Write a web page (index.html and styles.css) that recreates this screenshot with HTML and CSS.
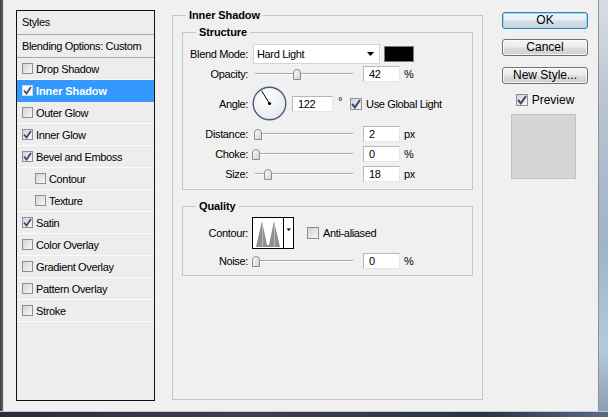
FILE: index.html
```html
<!DOCTYPE html>
<html>
<head>
<meta charset="utf-8">
<title>Layer Style</title>
<link rel="stylesheet" href="styles.css">
</head>
<body>
<div class="screen">
  <div class="frame-row">
    <div class="edge-left"></div>
    <div class="dialog">
      <div class="styles-panel">
        <div class="sp-head first">Styles</div>
        <div class="sp-head">Blending Options: Custom</div>
        <div class="sp-item"><span class="cb"></span>Drop Shadow</div>
        <div class="sp-item sel"><span class="cb on"><svg width="9" height="9" viewBox="0 0 9 9"><path d="M1 4.5 L3.5 7.5 L8 1" fill="none" stroke="#3b4a74" stroke-width="1.8"/></svg></span>Inner Shadow</div>
        <div class="sp-item"><span class="cb"></span>Outer Glow</div>
        <div class="sp-item"><span class="cb on"><svg width="9" height="9" viewBox="0 0 9 9"><path d="M1 4.5 L3.5 7.5 L8 1" fill="none" stroke="#3b4a74" stroke-width="1.8"/></svg></span>Inner Glow</div>
        <div class="sp-item"><span class="cb on"><svg width="9" height="9" viewBox="0 0 9 9"><path d="M1 4.5 L3.5 7.5 L8 1" fill="none" stroke="#3b4a74" stroke-width="1.8"/></svg></span>Bevel and Emboss</div>
        <div class="sp-item sub"><span class="cb"></span>Contour</div>
        <div class="sp-item sub"><span class="cb"></span>Texture</div>
        <div class="sp-item"><span class="cb on"><svg width="9" height="9" viewBox="0 0 9 9"><path d="M1 4.5 L3.5 7.5 L8 1" fill="none" stroke="#3b4a74" stroke-width="1.8"/></svg></span>Satin</div>
        <div class="sp-item"><span class="cb"></span>Color Overlay</div>
        <div class="sp-item"><span class="cb"></span>Gradient Overlay</div>
        <div class="sp-item"><span class="cb"></span>Pattern Overlay</div>
        <div class="sp-item"><span class="cb"></span>Stroke</div>
      </div>

      <div class="main">
        <fieldset class="grp outer">
          <legend>Inner Shadow</legend>
          <fieldset class="grp structure">
            <legend>Structure</legend>
            <div class="row r-blend">
              <span class="lbl">Blend Mode:</span>
              <div class="select"><span class="sel-text">Hard Light</span><svg class="sel-arrow" width="7" height="4" viewBox="0 0 7 4"><path d="M0 0 H7 L3.5 4 Z" fill="#000"/></svg></div>
              <div class="swatch"></div>
            </div>
            <div class="row r-opacity">
              <span class="lbl">Opacity:</span>
              <div class="slider"><div class="track"></div><svg class="thumb" style="left:41px" width="8" height="11" viewBox="0 0 8 11"><path d="M0.5 10.5 V4 Q0.5 0.5 4 0.5 Q7.5 0.5 7.5 4 V10.5 Z" fill="url(#tg)" stroke="#8c8c8c"/></svg></div>
              <div class="num">42</div><span class="unit">%</span>
            </div>
            <div class="row r-angle">
              <span class="lbl">Angle:</span>
              <svg class="dial" width="35" height="35" viewBox="0 0 35 35">
                <defs>
                  <radialGradient id="dg" cx="0.4" cy="0.35" r="0.7">
                    <stop offset="0" stop-color="#ffffff"/>
                    <stop offset="1" stop-color="#e4e8ee"/>
                  </radialGradient>
                  <linearGradient id="tg" x1="0" y1="0" x2="1" y2="1">
                    <stop offset="0" stop-color="#ffffff"/>
                    <stop offset="1" stop-color="#cfcfcf"/>
                  </linearGradient>
                </defs>
                <circle cx="17.5" cy="17.5" r="16.3" fill="url(#dg)" stroke="#4f5d78" stroke-width="1.4"/>
                <line x1="17.5" y1="17.5" x2="9.6" y2="4.8" stroke="#000" stroke-width="1"/>
                <circle cx="17.5" cy="17.5" r="1.6" fill="#000"/>
              </svg>
              <div class="num wide">122</div>
              <span class="deg">°</span>
              <span class="cb on big"><svg width="10" height="10" viewBox="0 0 9 9"><path d="M1 4.5 L3.5 7.5 L8 1" fill="none" stroke="#3b4a74" stroke-width="1.8"/></svg></span>
              <span class="cb-text">Use Global Light</span>
            </div>
            <div class="row r-distance">
              <span class="lbl">Distance:</span>
              <div class="slider"><div class="track"></div><svg class="thumb" style="left:2px" width="8" height="11" viewBox="0 0 8 11"><path d="M0.5 10.5 V4 Q0.5 0.5 4 0.5 Q7.5 0.5 7.5 4 V10.5 Z" fill="url(#tg)" stroke="#8c8c8c"/></svg></div>
              <div class="num">2</div><span class="unit">px</span>
            </div>
            <div class="row r-choke">
              <span class="lbl">Choke:</span>
              <div class="slider"><div class="track"></div><svg class="thumb" style="left:0px" width="8" height="11" viewBox="0 0 8 11"><path d="M0.5 10.5 V4 Q0.5 0.5 4 0.5 Q7.5 0.5 7.5 4 V10.5 Z" fill="url(#tg)" stroke="#8c8c8c"/></svg></div>
              <div class="num">0</div><span class="unit">%</span>
            </div>
            <div class="row r-size">
              <span class="lbl">Size:</span>
              <div class="slider"><div class="track"></div><svg class="thumb" style="left:12px" width="8" height="11" viewBox="0 0 8 11"><path d="M0.5 10.5 V4 Q0.5 0.5 4 0.5 Q7.5 0.5 7.5 4 V10.5 Z" fill="url(#tg)" stroke="#8c8c8c"/></svg></div>
              <div class="num">18</div><span class="unit">px</span>
            </div>
          </fieldset>

          <fieldset class="grp quality">
            <legend>Quality</legend>
            <div class="row r-contour">
              <span class="lbl">Contour:</span>
              <svg class="contour" width="42" height="32" viewBox="0 0 42 32">
                <rect x="0.5" y="0.5" width="41" height="31" fill="#fff" stroke="#000"/>
                <polygon points="4,30 10,4 15,28 17,28 22,4 28,30" fill="#8f8f8f"/>
                <line x1="10.5" y1="8" x2="10.5" y2="30" stroke="#c8c8c8" stroke-width="0.8"/>
                <line x1="22.5" y1="8" x2="22.5" y2="30" stroke="#c8c8c8" stroke-width="0.8"/>
                <line x1="31.5" y1="0.5" x2="31.5" y2="31.5" stroke="#000"/>
                <path d="M34.5 11.5 H39 L36.75 14 Z" fill="#000"/>
              </svg>
              <span class="cb big aa"></span>
              <span class="cb-text">Anti-aliased</span>
            </div>
            <div class="row r-noise">
              <span class="lbl">Noise:</span>
              <div class="slider"><div class="track"></div><svg class="thumb" style="left:0px" width="8" height="11" viewBox="0 0 8 11"><path d="M0.5 10.5 V4 Q0.5 0.5 4 0.5 Q7.5 0.5 7.5 4 V10.5 Z" fill="url(#tg)" stroke="#8c8c8c"/></svg></div>
              <div class="num">0</div><span class="unit">%</span>
            </div>
          </fieldset>
        </fieldset>
      </div>

      <div class="side">
        <div class="btn default">OK</div>
        <div class="btn b-cancel">Cancel</div>
        <div class="btn b-new">New Style...</div>
        <div class="preview-row">
          <span class="cb on big"><svg width="10" height="10" viewBox="0 0 9 9"><path d="M1 4.5 L3.5 7.5 L8 1" fill="none" stroke="#3b4a74" stroke-width="1.8"/></svg></span>
          <span class="pv-text">Preview</span>
        </div>
        <div class="pv-swatch"></div>
      </div>
    </div>
    <div class="edge-right"></div>
  </div>
  <div class="edge-bottom"></div>
</div>
</body>
</html>
```

FILE: styles.css
```css
* { box-sizing: border-box; }
html, body { margin: 0; padding: 0; }
body {
  width: 608px;
  height: 417px;
  overflow: hidden;
  background: #262a36;
  font-family: "Liberation Sans", Arial, sans-serif;
  font-size: 11px;
  color: #000;
}
.screen { display: flex; flex-direction: column; width: 608px; height: 417px; }
.frame-row { display: flex; height: 411px; }
.edge-left {
  width: 4px;
  flex: none;
  background: linear-gradient(90deg, #3a3d45, #62666f);
  border-right: 1px solid #dcdcdc;
}
.edge-right {
  width: 10px;
  flex: none;
  border-left: 1px solid #8d939b;
  background: linear-gradient(180deg, #d9dde2 0%, #b9c4d0 25%, #9fb3cb 60%, #b4c8de 85%, #8e9fb6 100%);
}
.edge-bottom {
  height: 6px;
  border-top: 1px solid #c9ccd2;
  background: linear-gradient(90deg, #2a2c36 0%, #3a3f55 40%, #2c3247 80%, #5b6a85 100%);
}
.dialog {
  flex: 1;
  display: flex;
  align-items: flex-start;
  background: #f0f0f0;
  padding-left: 12px;
}

/* styles list */
.styles-panel {
  margin-top: 10px;
  width: 139px;
  height: 391px;
  flex: none;
  border: 1px solid #111;
  background: #ededed;
  letter-spacing: -0.35px;
}
.sp-head {
  height: 23px;
  line-height: 22px;
  padding-left: 5px;
  border-bottom: 1px solid #a8a8a8;
}
.sp-head.first { height: 24px; line-height: 23px; }
.sp-item {
  height: 22px;
  display: flex;
  align-items: center;
  padding-left: 5px;
  border-bottom: 1px solid #fbfbfb;
}
.sp-item.sub { padding-left: 18px; }
.sp-item.sel {
  background: #3399ff;
  color: #fff;
  font-weight: bold;
  letter-spacing: -0.1px;
  border-bottom-color: #3399ff;
}

/* checkbox */
.cb {
  width: 11px;
  height: 11px;
  flex: none;
  margin-right: 3px;
  border: 1px solid #8e8f8f;
  background: linear-gradient(135deg, #d4d4d4, #f7f7f7);
  display: flex;
  align-items: center;
  justify-content: center;
}
.cb svg { display: block; }
.sel .cb { background: #fff; border-color: #cfd8e8; }
.cb.big { width: 12px; height: 12px; }

/* group boxes */
.main {
  margin-left: 17px;
  margin-top: 8px;
  width: 311px;
  height: 392px;
  flex: none;
}
fieldset.grp {
  margin: 0;
  border: 1px solid #c4c4c4;
  min-width: 0;
}
fieldset.grp > legend {
  font-weight: bold;
  line-height: 14px;
  padding: 0 3px;
  letter-spacing: -0.1px;
}
fieldset.outer {
  height: 100%;
  padding: 3px 9px 0 9px;
}
fieldset.outer > legend { margin-left: 4px; }
fieldset.structure { padding: 5px 0 7px 0; }
fieldset.structure > legend { margin-left: 13px; }
fieldset.quality { margin-top: 9px; padding: 4px 0 6px 0; }
fieldset.quality > legend { margin-left: 13px; }

.row { display: flex; align-items: center; height: 16px; letter-spacing: -0.35px; }
.r-blend { height: 20px; }
.r-opacity { margin-top: 2px; }
.r-angle { margin-top: 4px; height: 35px; }
.r-distance { margin-top: 5px; }
.r-choke { margin-top: 4px; }
.r-size { margin-top: 4px; }
.r-contour { height: 32px; }
.r-noise { margin-top: 4px; }

.lbl {
  width: 65px;
  flex: none;
  text-align: right;
  margin-right: 4px;
}
.select {
  margin-left: 1px;
  width: 127px;
  height: 20px;
  background: #fff;
  border: 1px solid #d4d4d4;
  display: flex;
  align-items: center;
  padding-left: 3px;
  padding-right: 5px;
}
.sel-text { flex: 1; }
.sel-arrow { display: block; }
.swatch {
  margin-left: 4px;
  width: 30px;
  height: 16px;
  background: #000;
  border: 1px solid #7a7a7a;
}
.slider {
  position: relative;
  width: 101px;
  height: 16px;
  flex: none;
  display: flex;
  align-items: center;
}
.track {
  margin-left: 3px;
  width: 98px;
  height: 2px;
  border-top: 1px solid #a9a9a9;
  border-bottom: 1px solid #ffffff;
}
.thumb { position: absolute; top: 3px; display: block; }
.num {
  margin-left: 10px;
  width: 37px;
  height: 16px;
  background: #fff;
  border: 1px solid;
  border-color: #b5b8bf #e3e6ea #e3e6ea #b5b8bf;
  padding-left: 5px;
  line-height: 14px;
  flex: none;
}
.num.wide { margin-left: 5px; width: 41px; }
.unit { margin-left: 4px; }
.deg { margin-left: 5px; align-self: flex-start; margin-top: 9px; }
.r-angle .cb { margin-left: 8px; margin-right: 4px; }
.dial { display: block; flex: none; }
.contour { display: block; flex: none; }
.cb.aa { margin-left: 13px; margin-right: 4px; }

/* right side */
.side {
  margin-left: 19px;
  margin-top: 12px;
  width: 86px;
  flex: none;
  display: flex;
  flex-direction: column;
}
.btn {
  height: 17px;
  border: 1px solid #707070;
  border-radius: 3px;
  background: linear-gradient(180deg, #f4f4f4 0%, #ebebeb 48%, #dddddd 52%, #cfcfcf 100%);
  box-shadow: inset 0 0 0 1px rgba(255,255,255,0.7);
  font-size: 12px;
  line-height: 15px;
  text-align: center;
  color: #000;
}
.btn.default {
  border-color: #3c7fb1;
  box-shadow: inset 0 0 0 1px #9ad7f2;
  background: linear-gradient(180deg, #f2f8fc 0%, #e6eef4 48%, #d6dfe6 52%, #c9d4dc 100%);
}
.b-cancel { margin-top: 10px; }
.b-new { margin-top: 11px; }
.preview-row {
  margin-top: 8px;
  height: 16px;
  display: flex;
  align-items: center;
  justify-content: center;
  font-size: 12px;
}
.preview-row .cb { margin-right: 4px; }
.pv-swatch {
  margin-top: 6px;
  margin-left: 9px;
  width: 65px;
  height: 65px;
  background: #d6d6d6;
  border: 1px solid #c2c2c2;
}
```
